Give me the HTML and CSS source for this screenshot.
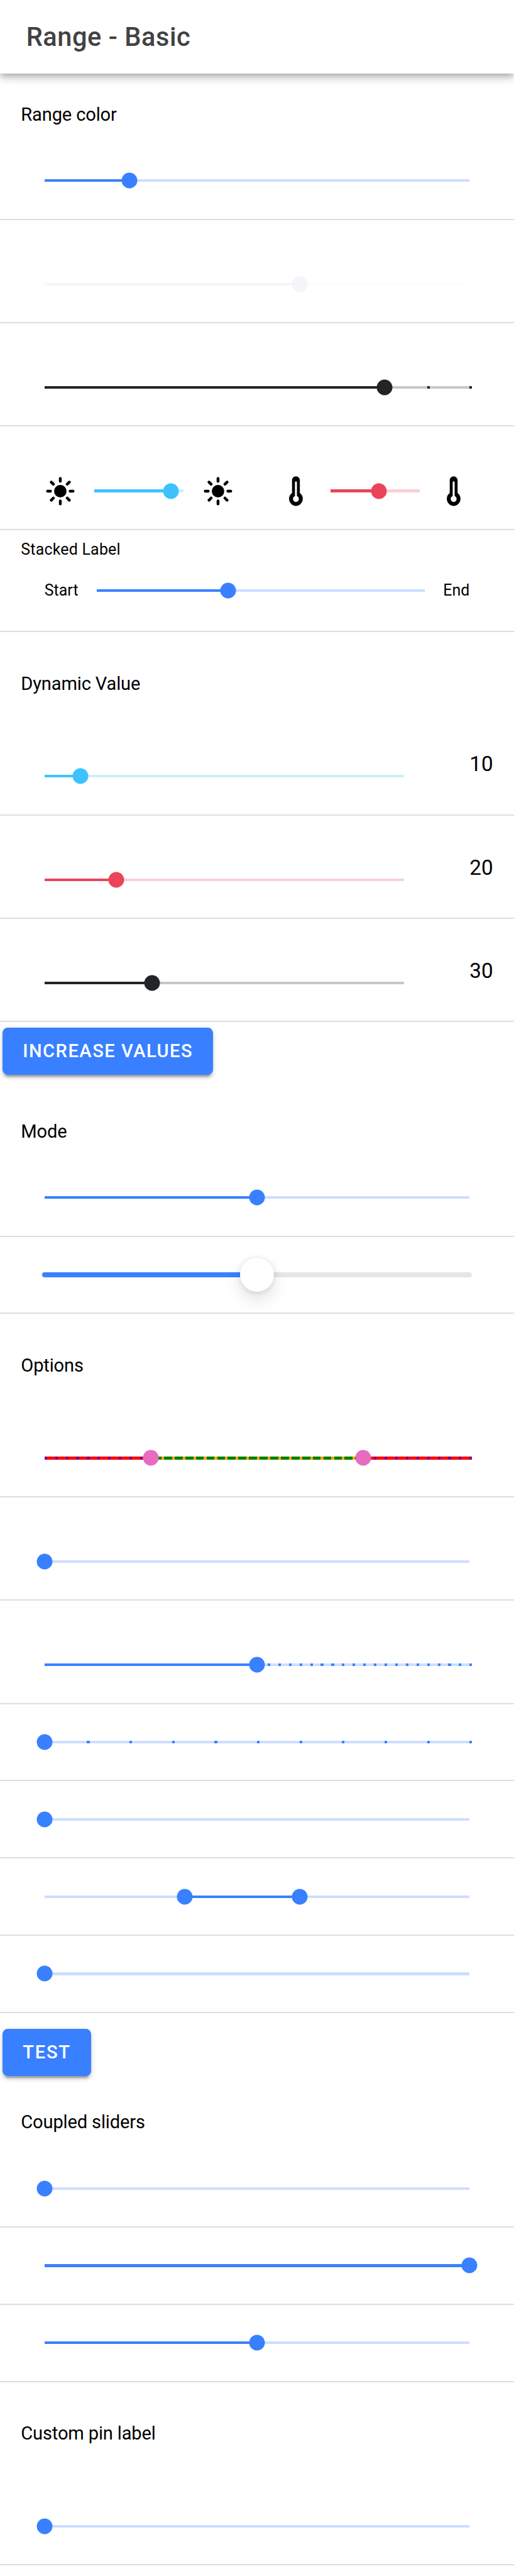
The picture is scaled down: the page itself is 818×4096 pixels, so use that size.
FILE: index.html
```html
<!DOCTYPE html>
<html lang="en">
<head>
<meta charset="UTF-8">
<title>Range - Basic</title>
<link rel="stylesheet" href="styles.css">
</head>
<body>
<svg class="defs" aria-hidden="true">
  <symbol id="sunny" viewBox="0 0 512 512">
    <path d="M256 48v48M256 416v48M403.080 108.920l-33.940 33.940M142.860 369.140l-33.940 33.940M464 256h-48M96 256H48M403.080 403.080l-33.940-33.940M142.860 142.860l-33.940-33.940" fill="none" stroke="currentColor" stroke-width="46" stroke-linecap="round"/>
    <circle cx="256" cy="256" r="102" fill="currentColor"/>
  </symbol>
  <symbol id="thermometer" viewBox="0 0 512 512">
    <path fill="currentColor" fill-rule="evenodd" d="M320 287V79c0-35-29-63-64-63s-64 28-64 63v208c-29 20-48 54-48 92 0 64 50 117 112 117s112-53 112-117c0-38-19-72-48-92zM256 432c-27 0-48-22-48-49 0-21 13-39 32-46V112a16 16 0 0 1 32 0v225c19 7 32 25 32 46 0 27-21 49-48 49z"/>
  </symbol>
</svg>

<header class="toolbar"><h1 class="title">Range - Basic</h1></header>

<main>
  <section class="list">
    <h2 class="list-header">Range color</h2>
    <div class="item"><div class="range"><div class="track"><i class="bar" style="left:0;width:20%"></i><i class="knob" style="left:20%"></i></div></div></div>
    <div class="item pin"><div class="range light"><div class="track"><i class="bar" style="left:0;width:60%"></i><i class="knob" style="left:60%"></i></div></div></div>
    <div class="item pin"><div class="range dark"><div class="track" data-ticks="10" data-from="0" data-to="80"><i class="bar" style="left:0;width:80%"></i><i class="knob" style="left:80%"></i></div></div></div>
    <div class="item pin">
      <div class="range secondary"><svg class="icon"><use href="#sunny"/></svg><div class="track"><i class="bar" style="left:0;width:85.700%"></i><i class="knob" style="left:85.700%"></i></div><svg class="icon"><use href="#sunny"/></svg></div>
      <div class="range danger"><svg class="icon"><use href="#thermometer"/></svg><div class="track"><i class="bar" style="left:0;width:54%"></i><i class="knob" style="left:54%"></i></div><svg class="icon"><use href="#thermometer"/></svg></div>
    </div>
    <div class="item stacked">
      <div class="stacked-label">Stacked Label</div>
      <div class="range"><span class="edge">Start</span><div class="track"><i class="bar" style="left:0;width:40%"></i><i class="knob" style="left:40%"></i></div><span class="edge">End</span></div>
    </div>
  </section>

  <section class="list">
    <h2 class="list-header">Dynamic Value</h2>
    <div class="item pin"><div class="range secondary"><div class="track"><i class="bar" style="left:0;width:10%"></i><i class="knob" style="left:10%"></i></div></div><span class="note">10</span></div>
    <div class="item pin"><div class="range danger"><div class="track"><i class="bar" style="left:0;width:20%"></i><i class="knob" style="left:20%"></i></div></div><span class="note">20</span></div>
    <div class="item pin"><div class="range dark"><div class="track"><i class="bar" style="left:0;width:30%"></i><i class="knob" style="left:30%"></i></div></div><span class="note">30</span></div>
    <button class="button button-wide">Increase values</button>
  </section>

  <section class="list">
    <h2 class="list-header">Mode</h2>
    <div class="item"><div class="range"><div class="track"><i class="bar" style="left:0;width:50%"></i><i class="knob" style="left:50%"></i></div></div></div>
    <div class="item"><div class="range ios"><div class="track"><i class="bar" style="left:0;width:50%"></i><i class="knob" style="left:50%"></i></div></div></div>
  </section>

  <section class="list">
    <h2 class="list-header">Options</h2>
    <div class="item pin"><div class="range custom"><div class="track" data-ticks="40" data-from="25" data-to="75"><i class="bar" style="left:25%;width:50%"></i><i class="knob" style="left:25%"></i><i class="knob" style="left:75%"></i></div></div></div>
    <div class="item pin"><div class="range"><div class="track"><i class="knob" style="left:0"></i></div></div></div>
    <div class="item pin"><div class="range"><div class="track" data-ticks="40" data-from="0" data-to="50"><i class="bar" style="left:0;width:50%"></i><i class="knob" style="left:50%"></i></div></div></div>
    <div class="item"><div class="range"><div class="track" data-ticks="10" data-from="0" data-to="0"><i class="knob" style="left:0"></i></div></div></div>
    <div class="item"><div class="range"><div class="track"><i class="knob" style="left:0"></i></div></div></div>
    <div class="item"><div class="range"><div class="track"><i class="bar" style="left:33%;width:27%"></i><i class="knob" style="left:33%"></i><i class="knob" style="left:60%"></i></div></div></div>
    <div class="item"><div class="range"><div class="track"><i class="knob" style="left:0"></i></div></div></div>
  </section>

  <button class="button">Test</button>

  <section class="list">
    <h2 class="list-header">Coupled sliders</h2>
    <div class="item"><div class="range"><div class="track"><i class="knob" style="left:0"></i></div></div></div>
    <div class="item"><div class="range"><div class="track"><i class="bar" style="left:0;width:100%"></i><i class="knob" style="left:100%"></i></div></div></div>
    <div class="item"><div class="range"><div class="track"><i class="bar" style="left:0;width:50%"></i><i class="knob" style="left:50%"></i></div></div></div>
  </section>

  <section class="list">
    <h2 class="list-header">Custom pin label</h2>
    <div class="item pin"><div class="range"><div class="track"><i class="knob" style="left:0"></i></div></div></div>
  </section>
</main>
<script src="ticks.js"></script>
</body>
</html>
```

FILE: styles.css
```css
/* 1rem = 10 device-independent pixels on a 393-wide screen */
html {
  font-size: 20.813px;
}

* {
  box-sizing: border-box;
}

body {
  margin: 0;
  background: #fff;
  color: #000;
  font-family: Roboto, "Liberation Sans", sans-serif;
  overflow: hidden;
}

.defs {
  position: absolute;
  width: 0;
  height: 0;
}

.toolbar {
  display: flex;
  align-items: center;
  height: 5.6rem;
  padding: 0 2rem;
  background: #fff;
  box-shadow: 0 .2rem .4rem -.1rem rgba(0, 0, 0, .2), 0 .4rem .5rem 0 rgba(0, 0, 0, .14), 0 .1rem 1rem 0 rgba(0, 0, 0, .12);
}

.title {
  margin: 0;
  color: #424242;
  font-size: 2rem;
  font-weight: 500;
  letter-spacing: .0125em;
}

.list {
  padding: .8rem 0;
}

.list-header {
  display: flex;
  align-items: center;
  height: 4.5rem;
  margin: 0;
  padding: .15rem 1.6rem 0;
  font-size: 1.4rem;
  font-weight: 400;
  letter-spacing: -.006em;
}

.item {
  display: flex;
  height: 5.9rem;
  padding: 0 1.6rem;
  border-bottom: .1rem solid #dedede;
}

.pin {
  height: 7.9rem;
}

.range {
  --color: #3880ff;
  --rest: #cbdeff;
  --tick: var(--color);
  --tick-active: var(--color);
  display: flex;
  flex: 1;
  align-items: center;
  align-self: flex-end;
  gap: 1.4rem;
  height: 5.8rem;
  padding: 0 1.8rem;
}

.light { --color: #f4f5f8; --rest: #fcfdfe; }
.dark { --color: #222428; --rest: #c6c7c8; --tick-active: #1e2023; }
.secondary { --color: #3dc2ff; --rest: #cdefff; }
.danger { --color: #eb445a; --rest: #facfd5; }
.custom { --color: #008000; --rest: #f00; --tick: #800080; --tick-active: #ffa500; }

.track {
  position: relative;
  flex: 1;
  height: .2rem;
  background: var(--rest);
}

.bar {
  position: absolute;
  top: 0;
  height: 100%;
  background: var(--color);
}

.tick {
  position: absolute;
  top: 0;
  width: .2rem;
  height: .2rem;
  background: var(--tick);
}

.tick.active {
  background: var(--tick-active);
}

.knob {
  position: absolute;
  top: 50%;
  z-index: 1;
  width: 1.2rem;
  height: 1.2rem;
  border-radius: 50%;
  background: var(--color);
  transform: translate(-50%, -50%);
}

.custom .knob {
  background: #e76bbe;
}

.ios {
  --rest: #e6e6e6;
  padding: 0 1.6rem;
}

.ios .track {
  height: .4rem;
  border-radius: .2rem;
}

.ios .bar {
  border-radius: .2rem;
}

.ios .knob {
  width: 2.6rem;
  height: 2.6rem;
  background: #fff;
  box-shadow: 0 .05rem .4rem rgba(0, 0, 0, .12), 0 .6rem 1.3rem rgba(0, 0, 0, .12);
}

.icon {
  flex: none;
  width: 2.4rem;
  height: 2.4rem;
}

.stacked {
  flex-direction: column;
  height: 7.8rem;
}

.stacked-label {
  padding-top: .78rem;
  font-size: 1.2rem;
  line-height: 1.4rem;
  letter-spacing: .008em;
}

.stacked .range {
  flex: none;
  align-self: stretch;
  height: 4.2rem;
  margin-top: .32rem;
}

.edge {
  font-size: 1.2rem;
}

.note {
  align-self: center;
  margin-left: 3.2rem;
  padding-top: .12rem;
  font-size: 1.6rem;
}

.button {
  display: block;
  height: 3.6rem;
  margin: .4rem .2rem;
  padding: 0 1.1em;
  border: 0;
  border-radius: .4rem;
  background: #3880ff;
  color: #fff;
  font-family: inherit;
  font-size: 1.4rem;
  font-weight: 500;
  letter-spacing: .06em;
  text-transform: uppercase;
  box-shadow: 0 .3rem .1rem -.2rem rgba(0, 0, 0, .2), 0 .2rem .2rem 0 rgba(0, 0, 0, .14), 0 .1rem .5rem 0 rgba(0, 0, 0, .12);
}

.button-wide {
  letter-spacing: .051em;
}
```

FILE: ticks.js
```js
// Adds evenly spaced step marks to every track that asks for them.
document.querySelectorAll('[data-ticks]').forEach((track) => {
  const count = Number(track.dataset.ticks);
  const from = Number(track.dataset.from);
  const to = Number(track.dataset.to);
  for (let i = 0; i <= count; i++) {
    const position = (i * 100) / count;
    const tick = document.createElement('i');
    tick.className = position >= from && position <= to ? 'tick active' : 'tick';
    tick.style.left = position + '%';
    track.appendChild(tick);
  }
});
```
